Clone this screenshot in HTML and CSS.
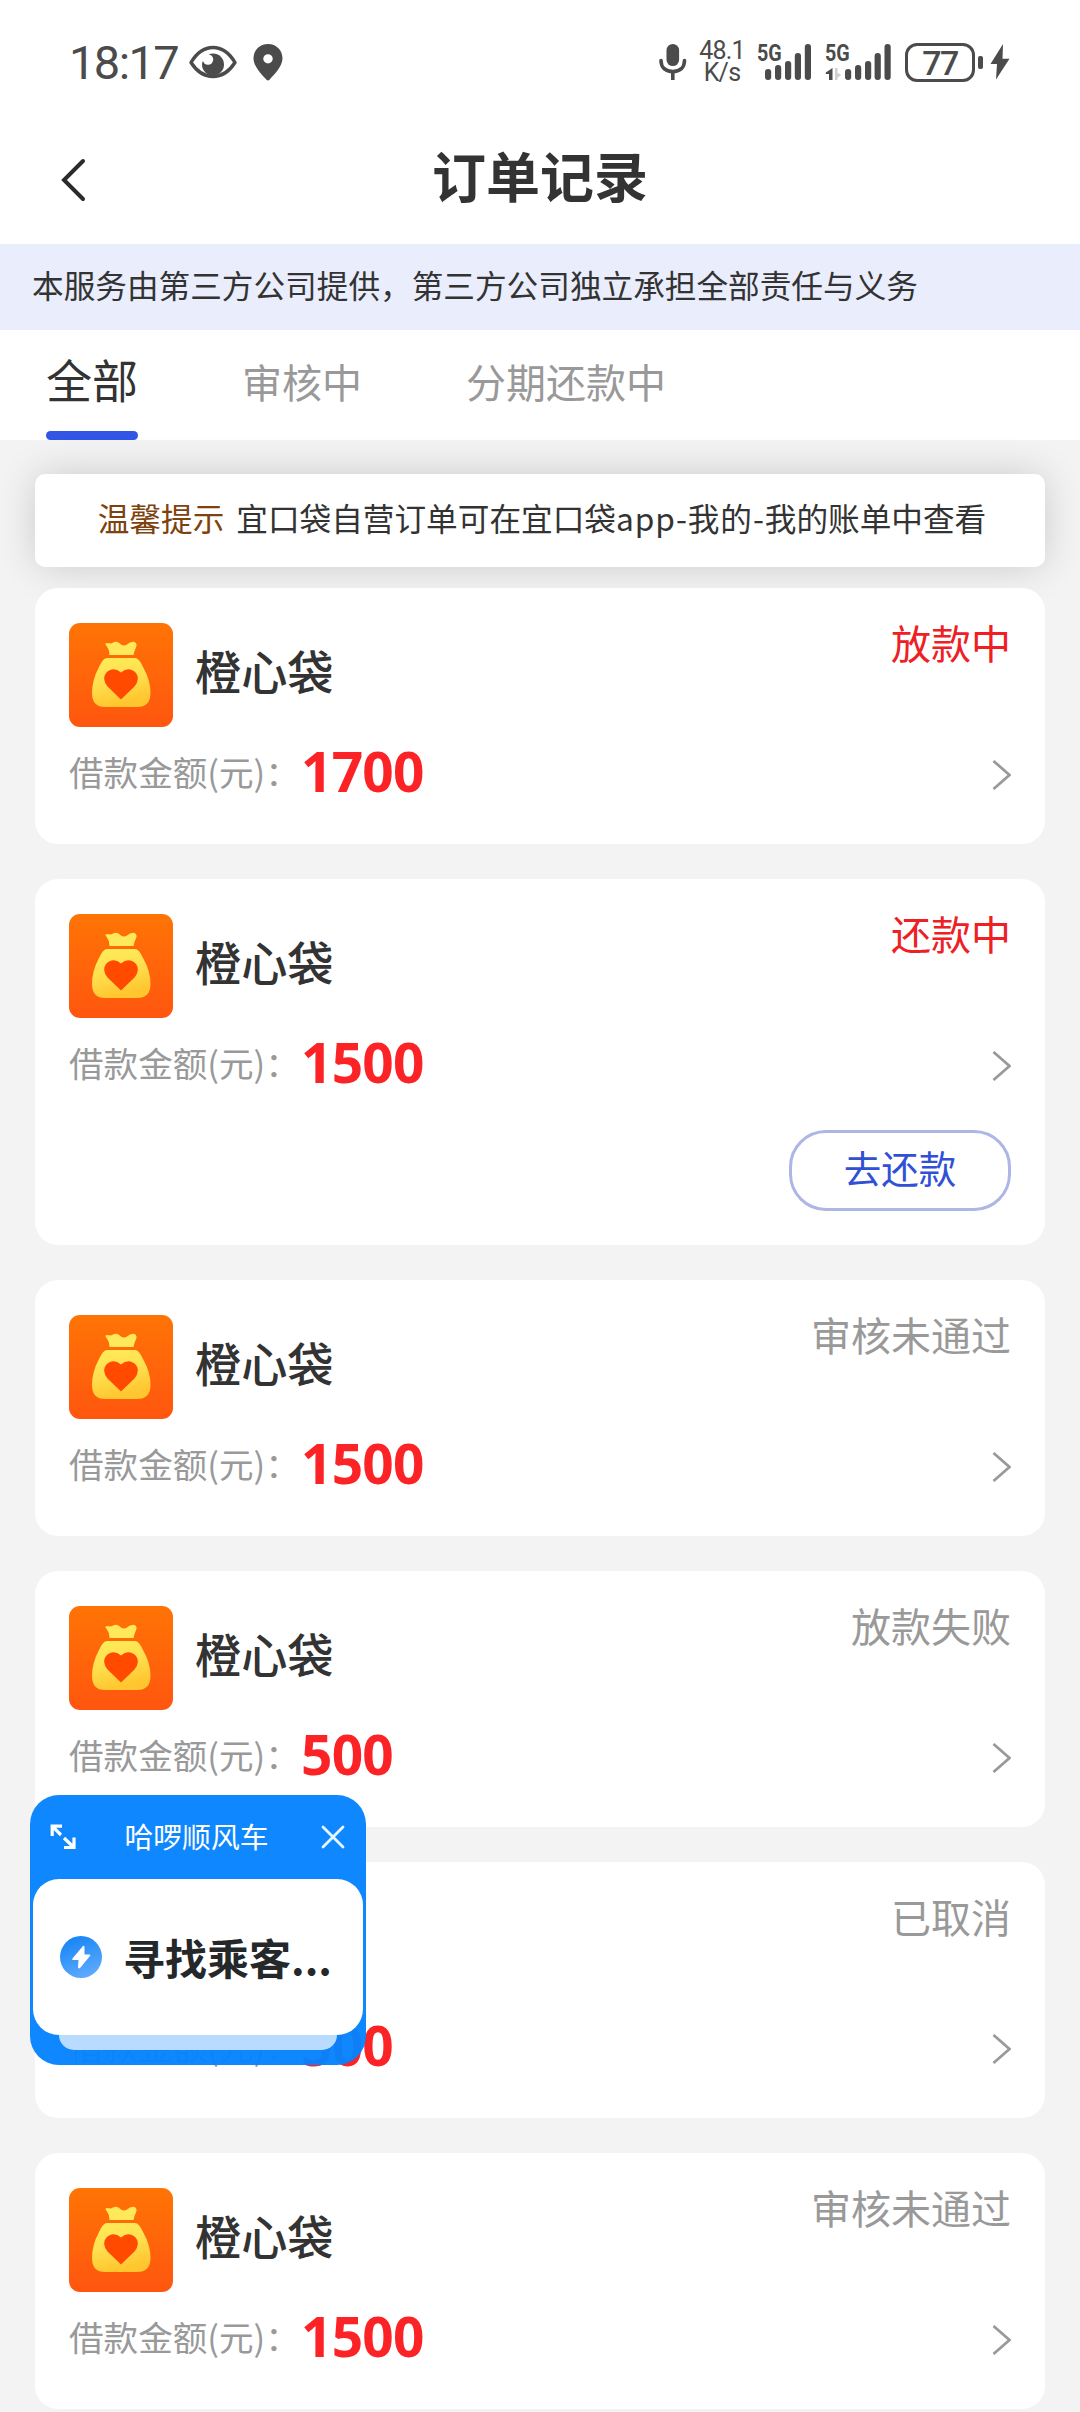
FILE: index.html
```html
<!DOCTYPE html>
<html lang="zh-CN">
<head>
  <meta charset="UTF-8" />
  <title>订单记录</title>
  <link rel="stylesheet" href="styles.css">
</head>
<body>
  <svg class="defs" width="0" height="0">
    <defs>
      <linearGradient id="tileFill" x1="0" y1="0" x2="0" y2="1">
        <stop offset="0" stop-color="#ff7405" />
        <stop offset="1" stop-color="#ff560f" />
      </linearGradient>
      <linearGradient id="bagFill" x1="0" y1="0" x2="0.3" y2="1">
        <stop offset="0" stop-color="#ffec58" />
        <stop offset="0.5" stop-color="#ffe050" />
        <stop offset="1" stop-color="#ffc62f" />
      </linearGradient>
      <linearGradient id="boltFill" x1="0.3" y1="0" x2="0.7" y2="1">
        <stop offset="0" stop-color="#1684f5" />
        <stop offset="1" stop-color="#61acff" />
      </linearGradient>
    </defs>
    <symbol id="bag" viewBox="0 0 104 104">
      <rect width="104" height="104" rx="11" fill="url(#tileFill)" />
      <path fill="#ffe95a" d="M36.500 21.500Q36 20 38 20L42 20.500Q45 18.500 47.500 18.800Q50 19.200 52 21.500Q55 23.500 58 21.500Q61 18.500 64.500 18.700Q68 19.500 67.500 23L65.500 28L64.500 32H40.500L39.800 27Q38.500 24 36.500 21.500Z" />
      <path fill="url(#bagFill)" d="M38 35H66Q70 35 74 44Q81.500 57 81.500 70Q81.500 84 68 84H36Q23 84 23 70Q23 57 30 44Q34 35 38 35Z" />
      <path fill="#ff4a00" d="M52 76.500L38.500 63.500Q32.500 56 37 50Q44 43 52 49.500Q60 43 67 50Q71.500 56 65.500 63.500Z" />
    </symbol>
    <symbol id="arrow" viewBox="0 0 20 32">
      <path d="M2.500 2L18.500 16L2.500 30" fill="none" stroke="#999" stroke-width="2.800" />
    </symbol>
  </svg>

  <div class="status-bar">
    <div class="status-left">
      <span class="clock">18:17</span>
      <svg class="eye" width="48" height="34" viewBox="0 0 48 34">
        <path d="M2 17.500Q11 2.500 24 2.500Q37 2.500 46 17.500Q37 31.500 24 31.500Q11 31.500 2 17.500Z" fill="none" stroke="#4b4b4b" stroke-width="3.400" stroke-linejoin="round" />
        <circle cx="24" cy="19.500" r="11" fill="#4b4b4b" />
        <circle cx="19" cy="14.500" r="5.200" fill="#fff" />
        <path d="M14 8L20 8L20 13L13 17Z" fill="#fff" />
      </svg>
      <svg class="pin" width="30" height="37" viewBox="0 0 30 38" preserveAspectRatio="none">
        <path d="M15 0C6.500 0 .5 6.500 .5 15C.5 24 11 33.500 13.500 36.800Q15 38.300 16.500 36.800C19 33.500 29.500 24 29.500 15C29.500 6.500 23.500 0 15 0ZM15 10.500A4.700 4.700 0 1 1 15 20A4.700 4.700 0 1 1 15 10.500Z" fill="#4b4b4b" fill-rule="evenodd" />
      </svg>
    </div>
    <div class="status-right">
      <svg class="mic" width="28" height="36" viewBox="0 0 28 36">
        <rect x="7.500" y="0" width="12.600" height="22" rx="6.300" fill="#4b4b4b" />
        <path d="M2 16.500C2 24 7 27.500 13.800 27.500S25.500 24 25.500 16.500" fill="none" stroke="#4b4b4b" stroke-width="3.600" stroke-linecap="round" />
        <path d="M13.800 27V36" stroke="#4b4b4b" stroke-width="3.600" />
      </svg>
      <div class="speed"><span>48.1</span><span>K/s</span></div>
      <div class="signal">
        <span class="net">5G</span>
        <svg width="56" height="36" viewBox="0 0 56 36">
          <g fill="#4b4b4b">
            <rect x="8" y="25" width="6.200" height="11" rx="3" />
            <rect x="18" y="21" width="6.200" height="15" rx="3" />
            <rect x="28" y="17" width="6.200" height="19" rx="3" />
            <rect x="37.800" y="9" width="6.200" height="27" rx="3" />
            <rect x="47.800" y="0" width="6.200" height="36" rx="3" />
          </g>
        </svg>
      </div>
      <div class="signal second">
        <span class="net">5G</span>
        <svg width="68" height="36" viewBox="0 0 68 36">
          <path d="M7.500 24V36H4V30H.8V28.500Z" fill="#4b4b4b" />
          <path d="M10 24H12.500V29L16.500 31L12.500 33.500V36H10Z" fill="#cfcfcf" />
          <g fill="#4b4b4b">
            <rect x="20" y="25" width="6.200" height="11" rx="3" />
            <rect x="30" y="21" width="6.200" height="15" rx="3" />
            <rect x="40" y="17" width="6.200" height="19" rx="3" />
            <rect x="49.600" y="9" width="6.200" height="27" rx="3" />
            <rect x="59.500" y="0" width="6.200" height="36" rx="3" />
          </g>
        </svg>
      </div>
      <div class="battery">77</div>
      <div class="battery-tip"></div>
      <svg class="charge" width="20" height="36" viewBox="0 0 20 38" preserveAspectRatio="none">
        <path d="M13 0L.5 21H7L6 37.500L19.500 15.500H12.500Z" fill="#4b4b4b" />
      </svg>
    </div>
  </div>

  <div class="header">
    <svg class="back" width="28" height="46" viewBox="0 0 28 46">
      <path d="M23 4L4 23L23 42" fill="none" stroke="#2b2b2b" stroke-width="4" stroke-linecap="round" />
    </svg>
    <h1>订单记录</h1>
  </div>

  <p class="notice">本服务由第三方公司提供，第三方公司独立承担全部责任与义务</p>

  <div class="tabs">
    <span class="tab active">全部</span>
    <span class="tab">审核中</span>
    <span class="tab">分期还款中</span>
  </div>

  <div class="content">
    <div class="tip"><span class="tip-label">温馨提示</span>宜口袋自营订单可在宜口袋<span class="path">app-我的-</span>我的账单中查看</div>

    <div class="card">
      <div class="card-top">
        <svg class="logo"><use href="#bag" /></svg>
        <span class="name">橙心袋</span>
        <span class="state red">放款中</span>
      </div>
      <div class="card-row">
        <span class="label">借款金额(元)：</span>
        <span class="amount">1700</span>
        <svg class="more"><use href="#arrow" /></svg>
      </div>
    </div>

    <div class="card with-action">
      <div class="card-top">
        <svg class="logo"><use href="#bag" /></svg>
        <span class="name">橙心袋</span>
        <span class="state red">还款中</span>
      </div>
      <div class="card-row">
        <span class="label">借款金额(元)：</span>
        <span class="amount">1500</span>
        <svg class="more"><use href="#arrow" /></svg>
      </div>
      <div class="card-action"><button class="pay">去还款</button></div>
    </div>

    <div class="card">
      <div class="card-top">
        <svg class="logo"><use href="#bag" /></svg>
        <span class="name">橙心袋</span>
        <span class="state">审核未通过</span>
      </div>
      <div class="card-row">
        <span class="label">借款金额(元)：</span>
        <span class="amount">1500</span>
        <svg class="more"><use href="#arrow" /></svg>
      </div>
    </div>

    <div class="card">
      <div class="card-top">
        <svg class="logo"><use href="#bag" /></svg>
        <span class="name">橙心袋</span>
        <span class="state">放款失败</span>
      </div>
      <div class="card-row">
        <span class="label">借款金额(元)：</span>
        <span class="amount">500</span>
        <svg class="more"><use href="#arrow" /></svg>
      </div>
    </div>

    <div class="card">
      <div class="card-top">
        <svg class="logo"><use href="#bag" /></svg>
        <span class="name">橙心袋</span>
        <span class="state">已取消</span>
      </div>
      <div class="card-row">
        <span class="label">借款金额(元)：</span>
        <span class="amount">500</span>
        <svg class="more"><use href="#arrow" /></svg>
      </div>
    </div>

    <div class="card">
      <div class="card-top">
        <svg class="logo"><use href="#bag" /></svg>
        <span class="name">橙心袋</span>
        <span class="state">审核未通过</span>
      </div>
      <div class="card-row">
        <span class="label">借款金额(元)：</span>
        <span class="amount">1500</span>
        <svg class="more"><use href="#arrow" /></svg>
      </div>
    </div>
  </div>

  <!-- floating ride window -->
  <div class="float">
    <div class="float-head">
      <svg width="26" height="26" viewBox="0 0 26 26">
        <path d="M2.200 12V2.200H12M2.200 2.200L11 11M24 13.500V23.500H14M24 23.500L14 14" fill="none" stroke="#fff" stroke-width="3.200" />
      </svg>
      <span class="float-title">哈啰顺风车</span>
      <svg width="24" height="24" viewBox="0 0 24 24">
        <path d="M2 2L22 22M22 2L2 22" stroke="#e8f4ff" stroke-width="2.800" stroke-linecap="round" />
      </svg>
    </div>
    <div class="float-body">
      <svg width="42" height="42" viewBox="0 0 42 42">
        <circle cx="21" cy="21" r="21" fill="url(#boltFill)" />
        <path d="M22.500 10.500L12.500 22.500Q11.500 24 13 24H18.500L18 31Q18.500 33.500 20.500 31.500L30 20Q31 18.500 29.500 18.500H24.500V11Q24 9 22.500 10.500Z" fill="#fff" />
      </svg>
      <span>寻找乘客...</span>
    </div>
    <div class="float-stack"></div>
  </div>
</body>
</html>
```
FILE: styles.css
```css
* {
  box-sizing: border-box;
}

body {
  margin: 0;
  height: 2412px;
  overflow: hidden;
  background: #f3f3f3;
  color: #333;
  font-family: "Noto Sans CJK SC", sans-serif;
}

svg {
  display: block;
  flex-shrink: 0;
}

.defs {
  position: absolute;
}

.status-bar {
  display: flex;
  justify-content: space-between;
  height: 128px;
  padding: 0 70px 4px 69px;
  background: #fff;
  color: #4b4b4b;
  font-family: Roboto, sans-serif;
}

.status-left, .status-right {
  display: flex;
  align-items: center;
}

.clock {
  width: 120px;
  font-size: 47px;
  letter-spacing: -1.6px;
  white-space: nowrap;
}

.pin {
  margin-left: 16px;
}

.speed {
  display: flex;
  flex-direction: column;
  align-items: center;
  width: 44px;
  margin-left: 13px;
  margin-right: -1px;
  font-size: 25px;
  line-height: 22px;
  letter-spacing: -0.8px;
}

.signal {
  position: relative;
  margin-left: 14px;
}

.second {
  margin-left: 12px;
}

/* network label sits over the empty corner of the bars */
.net {
  position: absolute;
  left: 0;
  top: -2px;
  font-size: 24px;
  font-weight: 700;
  line-height: 22px;
  transform: scaleX(0.82);
  transform-origin: left;
}

.battery {
  width: 70px;
  height: 39px;
  margin-left: 12px;
  border: 3px solid #4b4b4b;
  border-radius: 12px;
  font-size: 34px;
  font-weight: 500;
  line-height: 34px;
  letter-spacing: -1.5px;
  text-align: center;
}

.battery-tip {
  width: 5px;
  height: 13px;
  margin-left: 3px;
  border-radius: 2px;
  background: #4b4b4b;
}

.charge {
  margin-left: 7px;
}

.header {
  display: grid;
  grid-template-columns: 60px 1fr 60px;
  align-items: center;
  height: 116px;
  padding: 0 60px 12px;
  background: #fff;
}

h1 {
  margin: -10px 0 0;
  font-size: 54px;
  font-weight: 700;
  line-height: 80px;
  text-align: center;
}

.notice {
  height: 86px;
  margin: 0;
  padding-left: 32px;
  background: #eaedfc;
  font-size: 31.650px;
  line-height: 81px;
}

.tabs {
  display: flex;
  gap: 104px;
  height: 110px;
  padding-left: 46px;
  background: #fff;
}

.tab {
  color: #999;
  font-size: 40px;
  line-height: 102px;
}

.active {
  display: flex;
  flex-direction: column;
  justify-content: space-between;
  color: #333;
  font-size: 46px;
  line-height: 97px;
}

.active::after {
  content: "";
  height: 9px;
  border-radius: 5px;
  background: #3355e5;
}

.content {
  display: flex;
  flex-direction: column;
  gap: 35px;
  padding: 34px 35px 0;
}

.tip {
  height: 93px;
  margin-bottom: -14px;
  padding-left: 4px;
  border-radius: 10px;
  background: #fff;
  box-shadow: 0 0 38px rgba(0, 0, 0, 0.16);
  font-size: 31.650px;
  line-height: 86px;
  text-align: center;
  white-space: nowrap;
}

.tip-label {
  margin-right: 12px;
  color: #7d420e;
}

.path {
  letter-spacing: 0.9px;
}

.card {
  flex-shrink: 0;
  height: 256px;
  padding: 35px 34px 0;
  border-radius: 23px;
  background: #fff;
}

.with-action {
  height: 366px;
}

.card-top {
  display: flex;
  height: 104px;
}

.logo {
  width: 104px;
  height: 104px;
}

.name {
  margin-left: 22px;
  font-size: 46.200px;
  font-weight: 500;
  line-height: 94px;
}

.state {
  margin-left: auto;
  color: #999;
  font-size: 40px;
  line-height: 39px;
}

.red {
  color: #ee2024;
}

.card-row {
  display: flex;
  align-items: center;
  height: 88px;
}

.label {
  width: 232px;
  color: #999;
  font-size: 34.600px;
  line-height: 86px;
  white-space: nowrap;
}

.amount {
  color: #fb2326;
  font-family: "Noto Sans", sans-serif;
  font-size: 55px;
  font-weight: 700;
  line-height: 88px;
  letter-spacing: -0.8px;
}

.more {
  width: 20px;
  height: 32px;
  margin-top: 7px;
  margin-left: auto;
}

.card-action {
  display: flex;
  justify-content: flex-end;
  padding-top: 24px;
}

.pay {
  width: 222px;
  height: 81px;
  padding: 0 0 8px;
  border: 3px solid #adb6e5;
  border-radius: 37px;
  background: #fff;
  color: #3050d5;
  font-family: inherit;
  font-size: 37.500px;
}

.float {
  position: absolute;
  left: 30px;
  top: 1795px;
  width: 336px;
  height: 270px;
  padding: 0 3px;
  border-radius: 29px;
  background: rgba(5, 131, 255, 0.96);
}

.float-head {
  display: flex;
  align-items: center;
  justify-content: space-between;
  height: 84px;
  padding: 0 18px 0 17px;
}

.float-title {
  margin: -3px 4px 0 0;
  color: #fff;
  font-size: 28.800px;
  line-height: 40px;
}

.float-body {
  display: flex;
  align-items: center;
  gap: 21px;
  height: 156px;
  padding-left: 27px;
  border-radius: 26px;
  background: #fff;
  color: #25282b;
  font-size: 42px;
  font-weight: 700;
  line-height: 60px;
  white-space: nowrap;
}

.float-stack {
  height: 15px;
  margin: 0 26px;
  border-radius: 0 0 22px 22px;
  background: #b8dbff;
}
```
